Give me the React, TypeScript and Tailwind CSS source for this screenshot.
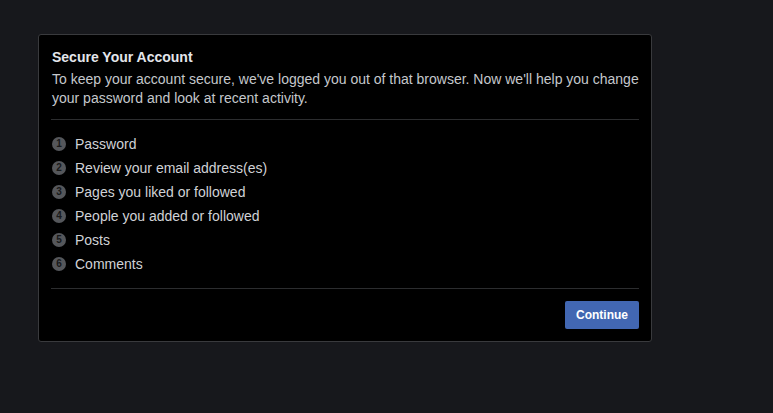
import React from "react";

const items = [
  "Password",
  "Review your email address(es)",
  "Pages you liked or followed",
  "People you added or followed",
  "Posts",
  "Comments",
];

export default function App() {
  return (
    <div
      className="min-h-[413px] w-full bg-[#17181c] pt-[34px] pl-[38px]"
      style={{ fontFamily: '"Liberation Sans", Arial, sans-serif' }}
    >
      <div className="w-[614px] h-[308px] bg-black border border-[#393a3d] rounded-[3px] px-[12px] pt-[12px] pb-[12px] flex flex-col">
        <div className="text-[14px] leading-[20px] font-bold text-[#e4e6eb] pl-px">
          Secure Your Account
        </div>
        <div className="mt-[3px] text-[14px] leading-[19px] text-[#c5c8cc] pl-px">
          To keep your account secure, we've logged you out of that browser. Now we'll help you change your password and look at recent activity.
        </div>
        <div className="mt-[11px] h-px bg-[#2c2d2f]" />
        <div className="mt-[12px] flex flex-col">
          {items.map((t, i) => (
            <div key={t} className="h-[24px] flex items-center">
              <div className="w-[14px] h-[14px] ml-px rounded-full bg-[#55575b] flex items-center justify-center text-[10px] font-bold text-[#18191a] leading-none">
                {i + 1}
              </div>
              <span className="ml-[9px] text-[14px] text-[#d0d2d6]">{t}</span>
            </div>
          ))}
        </div>
        <div className="mt-[12px] h-px bg-[#2c2d2f]" />
        <div className="mt-[12px] flex justify-end">
          <button className="w-[74px] h-[28px] rounded-[2px] bg-[#4267b2] text-white text-[12px] font-bold">
            Continue
          </button>
        </div>
      </div>
    </div>
  );
}
